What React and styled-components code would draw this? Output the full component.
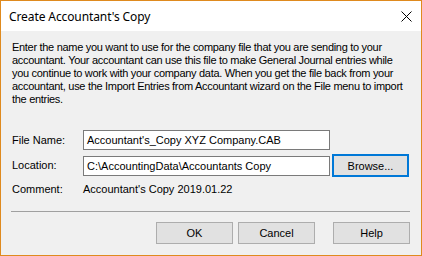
import styled, { createGlobalStyle } from "styled-components";

const GlobalStyle = createGlobalStyle`
    html, body {
        margin: 0;
        padding: 0;
        background: #ffffff;
    }
    * {
        box-sizing: border-box;
    }
`;

const uiFont = `"Liberation Sans", Arial, sans-serif`;

const Window = styled.div`
    width: 422px;
    height: 256px;
    border: 1px solid #df8a1e;
    background: #f0f0f0;
    display: flex;
    flex-direction: column;
    font-family: ${uiFont};
    font-size: 11px;
    color: #000;
`;

const TitleBar = styled.div`
    height: 30px;
    flex: none;
    background: #ffffff;
    display: flex;
    align-items: center;
    justify-content: space-between;
    padding: 0 9px 0 8px;
`;

const Title = styled.span`
    font-family: "Noto Sans", "Open Sans", sans-serif;
    font-size: 12px;
    letter-spacing: -0.1px;
    color: #000;
`;

const CloseIcon = styled.svg`
    width: 11px;
    height: 11px;
    display: block;
`;

const Body = styled.div`
    flex: 1;
    display: flex;
    flex-direction: column;
    padding: 10px 11px 0 11px;
`;

const Description = styled.p`
    margin: 0;
    line-height: 13px;
    height: 65px;
    letter-spacing: -0.3px;
    white-space: nowrap;
`;

const Form = styled.div`
    margin-top: 24px;
    display: grid;
    grid-template-columns: 69px 247px 77px;
    column-gap: 2px;
    align-items: center;
`;

const Label = styled.span`
    line-height: 13px;
    grid-column: 1;
`;

const TextBox = styled.div`
    height: 20px;
    border: 1px solid #7a7a7a;
    background: #ffffff;
    padding: 0 3px;
    display: flex;
    align-items: center;
    white-space: nowrap;
    overflow: hidden;
    grid-column: 2;
`;

const Row = styled.div`
    display: contents;
`;

const Value = styled.span`
    line-height: 13px;
    grid-column: 2 / 4;
`;

const Button = styled.div`
    height: ${(p) => (p.$tall ? "23px" : "22px")};
    width: 77px;
    border: ${(p) => (p.$focused ? "2px solid #0078d7" : "1px solid #adadad")};
    background: #e1e1e1;
    display: flex;
    align-items: center;
    justify-content: center;
`;

const Spacer = styled.div`
    height: ${(p) => p.$h}px;
    grid-column: 1 / 4;
`;

const Separator = styled.div`
    margin: 15px 0 0 -1px;
    height: 1px;
    background: #a0a0a0;
    width: 399px;
`;

const ButtonBar = styled.div`
    margin-top: 10px;
    display: flex;
    justify-content: flex-end;
    gap: 5px;
`;

const HelpGap = styled.div`
    width: 8px;
`;

export default function App() {
    return (
        <>
            <GlobalStyle />
            <Window>
                <TitleBar>
                    <Title>Create Accountant's Copy</Title>
                    <CloseIcon viewBox="0 0 11 11">
                        <path d="M0.5 0.5 L10.5 10.5 M10.5 0.5 L0.5 10.5" stroke="#000" strokeWidth="1" fill="none" />
                    </CloseIcon>
                </TitleBar>
                <Body>
                    <Description>
                        Enter the name you want to use for the company file that you are sending to your<br />
                        accountant. Your accountant can use this file to make General Journal entries while<br />
                        you continue to work with your company data. When you get the file back from your<br />
                        accountant, use the Import Entries from Accountant wizard on the File menu to import<br />
                        the entries.
                    </Description>
                    <Form>
                        <Row>
                            <Label>File Name:</Label>
                            <TextBox>Accountant's_Copy XYZ Company.CAB</TextBox>
                        </Row>
                        <Spacer $h={4} />
                        <Row>
                            <Label>Location:</Label>
                            <TextBox>C:\AccountingData\Accountants Copy</TextBox>
                            <Button $tall $focused>Browse...</Button>
                        </Row>
                        <Spacer $h={6} />
                        <Row>
                            <Label>Comment:</Label>
                            <Value>Accountant's Copy 2019.01.22</Value>
                        </Row>
                    </Form>
                    <Separator />
                    <ButtonBar>
                        <Button>OK</Button>
                        <Button>Cancel</Button>
                        <HelpGap />
                        <Button>Help</Button>
                    </ButtonBar>
                </Body>
            </Window>
        </>
    );
}
